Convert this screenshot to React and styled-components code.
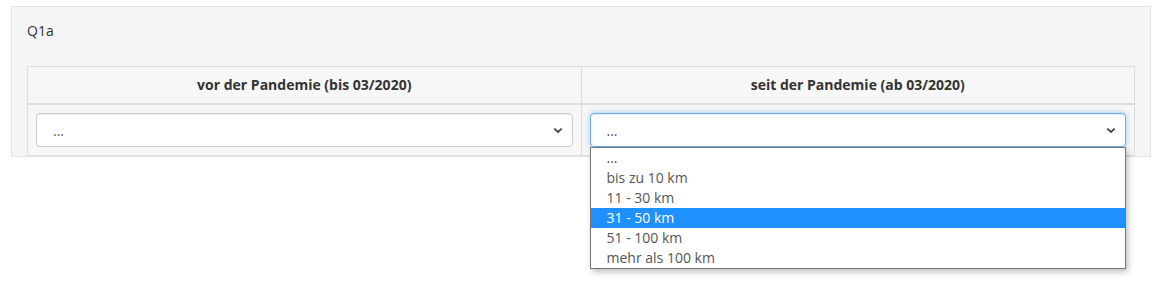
import React from 'react';
import styled, { createGlobalStyle } from 'styled-components';

const GlobalStyle = createGlobalStyle`
  body {
    margin: 0;
    background: #fff;
    font-family: "Open Sans", "Liberation Sans", sans-serif;
    font-size: 14px;
    color: #333;
  }
`;

const Page = styled.div`
  min-height: 284px;
  box-sizing: border-box;
  padding: 6px 7px 0 11px;
`;

const Well = styled.div`
  width: 1140px;
  box-sizing: border-box;
  background: #f5f5f5;
  border: 1px solid #e3e3e3;
  padding: 14px 15px 0 15px;
`;

const Label = styled.div`
  line-height: 20px;
  margin-bottom: 25px;
  color: #333;
`;

const Table = styled.div`
  display: grid;
  grid-template-columns: 1fr 1fr;
  border-left: 1px solid #ddd;
  background: #f7f7f7;
`;

const HeadCell = styled.div`
  padding: 8px;
  line-height: 20px;
  text-align: center;
  font-weight: 700;
  color: #333;
  border-top: 1px solid #ddd;
  border-right: 1px solid #ddd;
  border-bottom: 2px solid #ddd;
`;

const BodyCell = styled.div`
  padding: 8px;
  border-right: 1px solid #ddd;
  border-bottom: 1px solid #ddd;
`;

const SelectBox = styled.div`
  position: relative;
  height: 34px;
  box-sizing: border-box;
  display: flex;
  align-items: center;
  justify-content: space-between;
  padding: 0 8px 0 16px;
  background: #fff;
  border: 1px solid ${p => (p.$focused ? '#66afe9' : '#ccc')};
  border-radius: 4px;
  box-shadow: ${p =>
    p.$focused
      ? 'inset 0 1px 1px rgba(0,0,0,.075), 0 0 6px rgba(102,175,233,.6)'
      : 'inset 0 1px 1px rgba(0,0,0,.075)'};
  color: #555;
  font-size: 14px;
`;

const Value = styled.span`
  line-height: 20px;
  padding-top: 2px;
`;

const Chevron = styled.svg`
  width: 10px;
  height: 7px;
  margin-right: 1px;
`;

const Menu = styled.ul`
  position: absolute;
  top: 33px;
  left: -1px;
  right: -1px;
  margin: 0;
  padding: 0;
  list-style: none;
  background: #fff;
  border: 1px solid #767676;
  box-shadow: 2px 3px 6px rgba(0, 0, 0, 0.25);
  z-index: 5;
`;

const Option = styled.li`
  height: 20px;
  line-height: 20px;
  padding-left: 16px;
  font-size: 14px;
  color: ${p => (p.$active ? '#fff' : '#555')};
  background: ${p => (p.$active ? '#1e90ff' : 'transparent')};
`;

const options = ['...', 'bis zu 10 km', '11 - 30 km', '31 - 50 km', '51 - 100 km', 'mehr als 100 km'];

const ChevronIcon = () => (
  <Chevron viewBox="0 0 10 7">
    <path d="M1.3 1.6 L5 5 L8.7 1.6" fill="none" stroke="#444" strokeWidth="1.8" />
  </Chevron>
);

export default function App() {
  return (
    <>
      <GlobalStyle />
      <Page>
        <Well>
          <Label>Q1a</Label>
          <Table>
            <HeadCell>vor der Pandemie (bis 03/2020)</HeadCell>
            <HeadCell>seit der Pandemie (ab 03/2020)</HeadCell>
            <BodyCell>
              <SelectBox>
                <Value>...</Value>
                <ChevronIcon />
              </SelectBox>
            </BodyCell>
            <BodyCell>
              <SelectBox $focused>
                <Value>...</Value>
                <ChevronIcon />
                <Menu>
                  {options.map(o => (
                    <Option key={o} $active={o === '31 - 50 km'}>
                      {o}
                    </Option>
                  ))}
                </Menu>
              </SelectBox>
            </BodyCell>
          </Table>
        </Well>
      </Page>
    </>
  );
}
